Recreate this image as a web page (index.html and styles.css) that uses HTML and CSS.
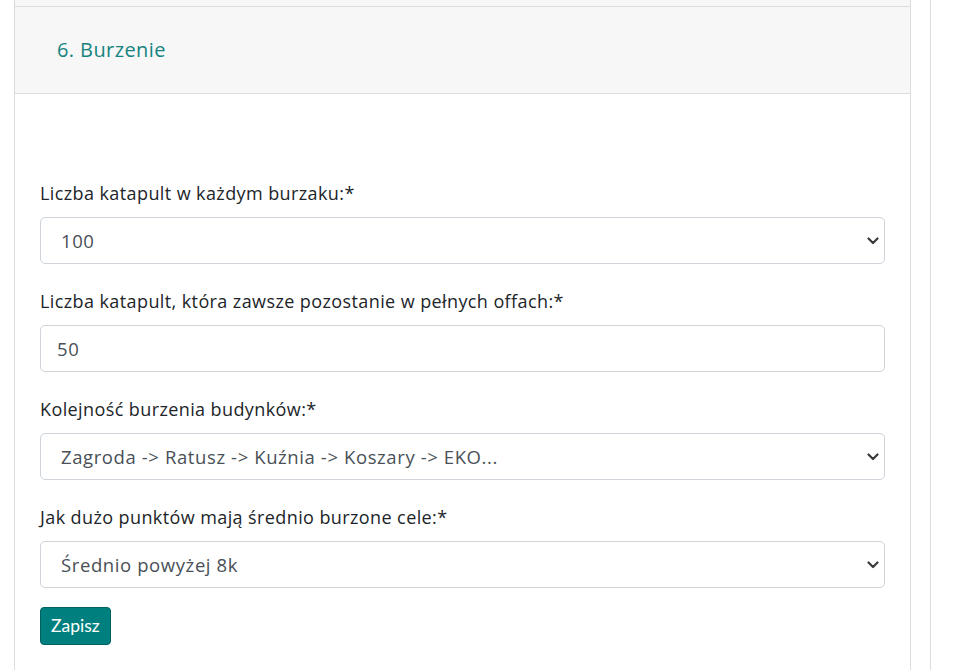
FILE: index.html
```html
<!DOCTYPE html>
<html lang="pl">
<head>
<meta charset="utf-8">
<title>Burzenie</title>
<link rel="stylesheet" href="styles.css">
</head>
<body>
<div class="page">
  <main class="main">
    <div class="prev-strip"></div>
    <section class="card">
      <header class="card-header">
        <h5 class="card-title">6. Burzenie</h5>
      </header>
      <div class="card-body">
        <form class="form">
          <div class="form-group">
            <label class="form-label">Liczba katapult w każdym burzaku:*</label>
            <div class="select-wrap">
              <select class="form-control form-select"><option>100</option></select>
              <svg class="chev" width="12" height="8" viewBox="0 0 12 8"><path d="M1.5 1.5 L6 6 L10.5 1.5" fill="none" stroke="#3a3a3a" stroke-width="2.2" stroke-linecap="round" stroke-linejoin="round"/></svg>
            </div>
          </div>
          <div class="form-group">
            <label class="form-label">Liczba katapult, która zawsze pozostanie w pełnych offach:*</label>
            <input class="form-control" type="text" value="50">
          </div>
          <div class="form-group">
            <label class="form-label">Kolejność burzenia budynków:*</label>
            <div class="select-wrap">
              <select class="form-control form-select"><option>Zagroda -&gt; Ratusz -&gt; Kuźnia -&gt; Koszary -&gt; EKO...</option></select>
              <svg class="chev" width="12" height="8" viewBox="0 0 12 8"><path d="M1.5 1.5 L6 6 L10.5 1.5" fill="none" stroke="#3a3a3a" stroke-width="2.2" stroke-linecap="round" stroke-linejoin="round"/></svg>
            </div>
          </div>
          <div class="form-group">
            <label class="form-label">Jak dużo punktów mają średnio burzone cele:*</label>
            <div class="select-wrap">
              <select class="form-control form-select"><option>Średnio powyżej 8k</option></select>
              <svg class="chev" width="12" height="8" viewBox="0 0 12 8"><path d="M1.5 1.5 L6 6 L10.5 1.5" fill="none" stroke="#3a3a3a" stroke-width="2.2" stroke-linecap="round" stroke-linejoin="round"/></svg>
            </div>
          </div>
          <button class="btn" type="button">Zapisz</button>
        </form>
      </div>
    </section>
  </main>
  <aside class="side"></aside>
</div>
</body>
</html>
```
FILE: styles.css
```css
* { box-sizing: border-box; }
html, body { margin: 0; padding: 0; background: #fff; }
body {
  font-family: "Open Sans", "Noto Sans", sans-serif;
  color: #212529;
  height: 670px;
  overflow: hidden;
}
.page {
  display: flex;
  padding-left: 14px;
  height: 100%;
}
.main {
  width: 897px;
  flex: none;
  display: flex;
  flex-direction: column;
}
.prev-strip {
  height: 6px;
  background: #f7f7f7;
  border-left: 1px solid #dcdcdc;
  border-right: 1px solid #dcdcdc;
}
.card {
  flex: 1;
  border: 1px solid #dcdcdc;
  border-bottom: none;
  background: #fff;
}
.card-header {
  background: #f7f7f7;
  border-bottom: 1px solid #dcdcdc;
  height: 87px;
  display: flex;
  align-items: center;
  padding: 0 42px;
}
.card-title {
  margin: 0;
  font-size: 20px;
  font-weight: 400;
  letter-spacing: 0.4px;
  color: #16837f;
  line-height: 1.2;
}
.card-body {
  padding: 86px 25px 0 25px;
}
.form-group {
  margin-bottom: 24px;
}
.form-label {
  display: block;
  font-size: 18px;
  letter-spacing: 0.4px;
  line-height: 27px;
  margin-bottom: 10px;
  color: #212529;
}
.select-wrap {
  position: relative;
}
.form-control {
  display: block;
  width: 100%;
  height: 47px;
  font-family: inherit;
  font-size: 18.5px;
  letter-spacing: 0.6px;
  color: #495057;
  background: #fff;
  border: 1px solid #ced4da;
  border-radius: 5px;
  padding: 0 16px;
  outline: none;
}
.form-select {
  appearance: none;
  -webkit-appearance: none;
  padding-left: 20px;
  padding-right: 40px;
}
.chev {
  position: absolute;
  right: 6px;
  top: 20px;
  pointer-events: none;
}
.btn {
  display: block;
  margin-top: -5px;
  font-family: "Lato", sans-serif;
  font-size: 17.5px;
  line-height: 24px;
  padding: 6px 10px;
  color: #fff;
  background: #007f7f;
  border: 1px solid #00605f;
  border-radius: 4px;
}
.side {
  margin-left: 19px;
  border-left: 1px solid #dcdcdc;
  flex: 1;
}
```
